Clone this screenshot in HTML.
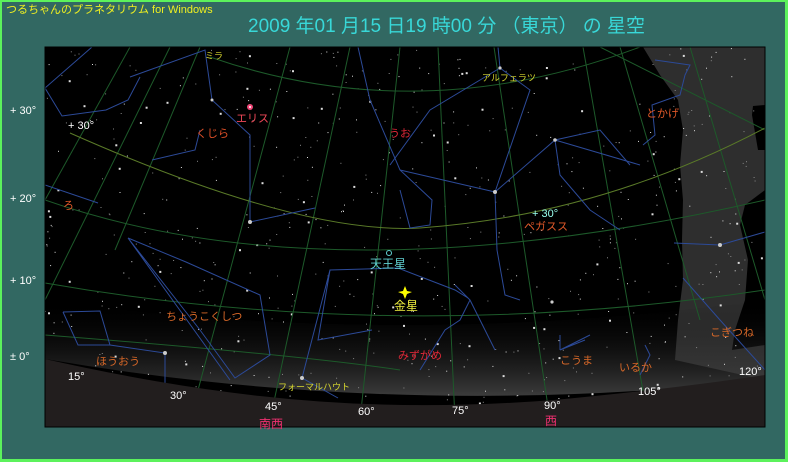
<!DOCTYPE html>
<html><head><meta charset="utf-8"><style>
html,body{margin:0;padding:0;}
body{width:788px;height:462px;overflow:hidden;background:#5cf25c;}
#f{position:absolute;left:2px;top:2px;width:783px;height:457px;background:#326862;}
svg{position:absolute;left:0;top:0;}
text{font-family:"Liberation Sans","Noto Sans CJK JP",sans-serif;}
</style></head><body>
<div id="f"></div>
<svg width="788" height="462" viewBox="0 0 788 462" xmlns="http://www.w3.org/2000/svg">
<defs>
<linearGradient id="glow" x1="0" y1="0" x2="0" y2="1">
<stop offset="0" stop-color="#000" stop-opacity="0"/>
<stop offset="0.5" stop-color="#333" stop-opacity="0.3"/>
<stop offset="1" stop-color="#4a4a4a" stop-opacity="0.8"/>
</linearGradient>
<clipPath id="sky"><rect x="45" y="47" width="720" height="380"/></clipPath>
</defs>
<text x="6" y="13" font-size="11" fill="#f0f020">つるちゃんのプラネタリウム for Windows</text>
<text x="248" y="32" font-size="19" fill="#38d8d8">2009 年01 月15 日19 時00 分 （東京） の 星空</text>
<g clip-path="url(#sky)">
<rect x="45" y="47" width="720" height="380" fill="#000"/>
<path d="M643,47 L660,75 L678,100 L683,130 L680,165 L683,200 L682,240 L683,280 L678,320 L675,360 L765,380 L765,47 Z" fill="#2e2e2e"/>
<path d="M765,105 L753,106 L752,115 L758,150 L765,150 Z M765,190 L745,205 L740,225 L748,260 L745,300 L735,330 L732,350 L765,345 Z" fill="#000"/>
<path d="M45,300 Q400,350 765,300 L765,380 Q400,420 45,359 Z" fill="url(#glow)"/>
<g id="stars"></g>
<g fill="none" stroke="#1d5a2a" stroke-width="1">
<path d="M130,47 L45,200"/><path d="M200,47 L115,250"/>
<path d="M210,57 Q420,130 640,47"/>
<path d="M170,47 L45,300"/>
<path d="M290,47 L190,420"/><path d="M350,47 L270,420"/><path d="M400,47 L360,420"/>
<path d="M438,47 L455,420"/><path d="M494,47 L550,420"/><path d="M583,47 L648,420"/>
<path d="M620,47 L700,320"/><path d="M690,47 L765,300"/>
<path d="M45,200 Q330,300 765,200"/>
<path d="M45,283 Q400,345 765,290"/>
<path d="M45,335 Q300,355 400,370"/>
<path d="M600,47 L765,130"/>
</g>
<path d="M70,133 Q300,235 420,228 Q600,215 765,128" fill="none" stroke="#5a7a28" stroke-width="1"/>
<g fill="none" stroke="#2c4a98" stroke-width="1">
<path d="M92,47 L45,88 L62,116 L106,110 L128,100 L140,77"/>
<path d="M130,77 L205,50 L212,100 L250,135 L250,165"/>
<path d="M152,160 L195,150 L200,130"/>
<path d="M45,185 L98,203"/>
<path d="M250,222 L315,208"/>
<path d="M250,165 L250,222"/>
<path d="M128,238 L186,262 L260,295 L270,355 L235,378 L200,330 L128,238 L230,380"/>
<path d="M63,312 L100,311 L110,345 L165,353 L165,383 M63,312 L78,345 L110,345"/>
<path d="M302,378 L330,270 L398,268 L455,290 L468,298 M330,270 L318,340 L372,330 M302,378 L338,398"/>
<path d="M358,47 L370,100 L400,170 L432,200 L430,225 L410,228 L400,190"/>
<path d="M498,47 L500,68 L430,110 L390,165 M500,68 L530,90 L495,192 L555,140 L600,130 L630,165"/>
<path d="M495,192 L497,250 L505,295 L520,300 M495,192 L400,170"/>
<path d="M555,140 L560,175 L590,210 L620,230 M555,140 L640,165"/>
<path d="M455,285 L470,300 L460,320 L445,330 L420,370 M470,300 L495,350"/>
<path d="M560,350 L590,335 M560,350 L560,335 M560,350 L585,340"/>
<path d="M645,345 L650,355 L640,375"/>
<path d="M674,243 L720,245 L765,232 M683,278 L720,320 L765,370"/>
<path d="M655,60 L690,65 L685,75 L680,95 L652,105 L655,135 L643,145"/>
</g>
<g fill="#ccc">
<circle cx="250" cy="222" r="2"/><circle cx="495" cy="192" r="2"/><circle cx="555" cy="140" r="1.8"/>
<circle cx="720" cy="245" r="2"/><circle cx="302" cy="378" r="2"/><circle cx="165" cy="353" r="2"/>
<circle cx="212" cy="100" r="1.5"/><circle cx="500" cy="68" r="1.6"/><circle cx="552" cy="302" r="1.6"/>
</g>
<path d="M45,359 Q160,385 260,396 Q400,412 554,400 Q680,388 765,375 L765,427 L45,427 Z" fill="#221e1e"/>
</g>
<rect x="45" y="47" width="720" height="380" fill="none" stroke="#000" stroke-width="1"/>
<g font-size="11" fill="#fff">
<text x="10" y="114">+ 30°</text><text x="10" y="202">+ 20°</text>
<text x="10" y="284">+ 10°</text><text x="10" y="360">± 0°</text>
</g>
<g font-size="11" fill="#fff">
<text x="68" y="380">15°</text><text x="170" y="399">30°</text><text x="265" y="410">45°</text>
<text x="358" y="415">60°</text><text x="452" y="414">75°</text><text x="544" y="409">90°</text>
<text x="638" y="395">105°</text><text x="739" y="375">120°</text>
<text x="68" y="129">+ 30°</text><text x="532" y="217" fill="#9fe">+ 30°</text>
</g>
<g font-size="12" fill="#f03070">
<text x="259" y="428">南西</text><text x="545" y="425">西</text>
</g>
<g font-size="9">
<text x="205" y="59" fill="#d8d830">ミラ</text>
<text x="482" y="81" fill="#d8d830">アルフェラツ</text>
<text x="278" y="390" fill="#d8d830">フォーマルハウト</text>
</g>
<g font-size="11">
<text x="236" y="122" fill="#f04858">エリス</text>
<text x="196" y="137" fill="#e05028">くじら</text>
<text x="389" y="137" fill="#e02838">うお</text>
<text x="646" y="117" fill="#e05828">とかげ</text>
<text x="63" y="209" fill="#e05828">ろ</text>
<text x="524" y="230" fill="#e05828">ペガスス</text>
<text x="166" y="320" fill="#d86828">ちょうこくしつ</text>
<text x="96" y="365" fill="#d86828">ほうおう</text>
<text x="398" y="359" fill="#e02838">みずがめ</text>
<text x="560" y="364" fill="#d86828">こうま</text>
<text x="619" y="371" fill="#d86828">いるか</text>
<text x="710" y="336" fill="#d86828">こぎつね</text>
<text x="370" y="268" fill="#60d0d0" font-size="12">天王星</text>
<text x="394" y="310" fill="#f0f040" font-size="12">金星</text>
</g>
<circle cx="250" cy="107" r="3" fill="#f04878"/><circle cx="250" cy="107" r="1" fill="#fff"/>
<circle cx="389" cy="253" r="2.5" fill="none" stroke="#60d0d0"/>
<path d="M405,286 L407,291 L412,292 L407,294 L405,299 L403,294 L398,292 L403,291 Z" fill="#ff0"/>
</svg>
<script>
var g=document.getElementById('stars'),s=12345;function r(){s=(s*16807)%2147483647;return s/2147483647;}
var h='';for(var i=0;i<650;i++){var x=45+r()*720,y=47+r()*370,a=r();h+='<rect x="'+x.toFixed(1)+'" y="'+y.toFixed(1)+'" width="'+(a>0.9?2:1)+'" height="'+(a>0.9?2:1)+'" fill="'+(a>0.5?'#ddd':'#888')+'"/>';}
g.innerHTML=h;
</script>
</body></html>
